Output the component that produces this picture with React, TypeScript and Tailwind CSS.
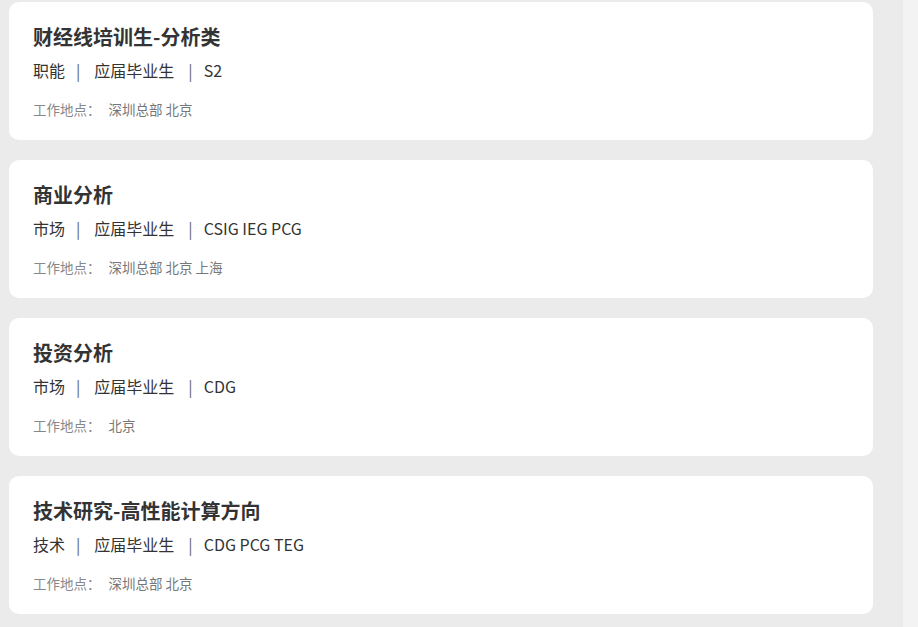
import React from "react";

const jobs = [
  { title: "财经线培训生-分析类", cat: "职能", type: "应届毕业生", bg: "S2", loc: "深圳总部 北京" },
  { title: "商业分析", cat: "市场", type: "应届毕业生", bg: "CSIG IEG PCG", loc: "深圳总部 北京 上海" },
  { title: "投资分析", cat: "市场", type: "应届毕业生", bg: "CDG", loc: "北京" },
  { title: "技术研究-高性能计算方向", cat: "技术", type: "应届毕业生", bg: "CDG PCG TEG", loc: "深圳总部 北京" },
];

export default function App() {
  return (
    <div
      className="flex h-[627px] w-[918px] overflow-hidden bg-[#ebebeb]"
      style={{ fontFamily: '"Noto Sans CJK SC", "Noto Sans", sans-serif' }}
    >
      <div className="flex w-[903px] flex-col gap-[20px] pl-[9px] pt-[2px]">
        {jobs.map((j) => (
          <div key={j.title} className="h-[138px] w-[864px] rounded-[10px] bg-white px-[24px] pt-[21px]">
            <div className="text-[20px] font-bold leading-[28px] text-[#333]">{j.title}</div>
            <div className="mt-[7px] flex items-center text-[16px] leading-[24px] text-[#333]">
              <span>{j.cat}</span>
              <span className="ml-[11px] mr-[14px] text-[#666]">|</span>
              <span>{j.type}</span>
              <span className="ml-[14px] mr-[11px] text-[#666]">|</span>
              <span>{j.bg}</span>
            </div>
            <div className="mt-[17px] flex text-[13.5px] leading-[20px] text-[#888]">
              <span>工作地点：</span>
              <span className="ml-[8px] text-[#777]">{j.loc.replace(/ /g, "\u00a0")}</span>
            </div>
          </div>
        ))}
      </div>
      <div className="h-full w-[15px] bg-[#f3f3f3]" />
    </div>
  );
}
